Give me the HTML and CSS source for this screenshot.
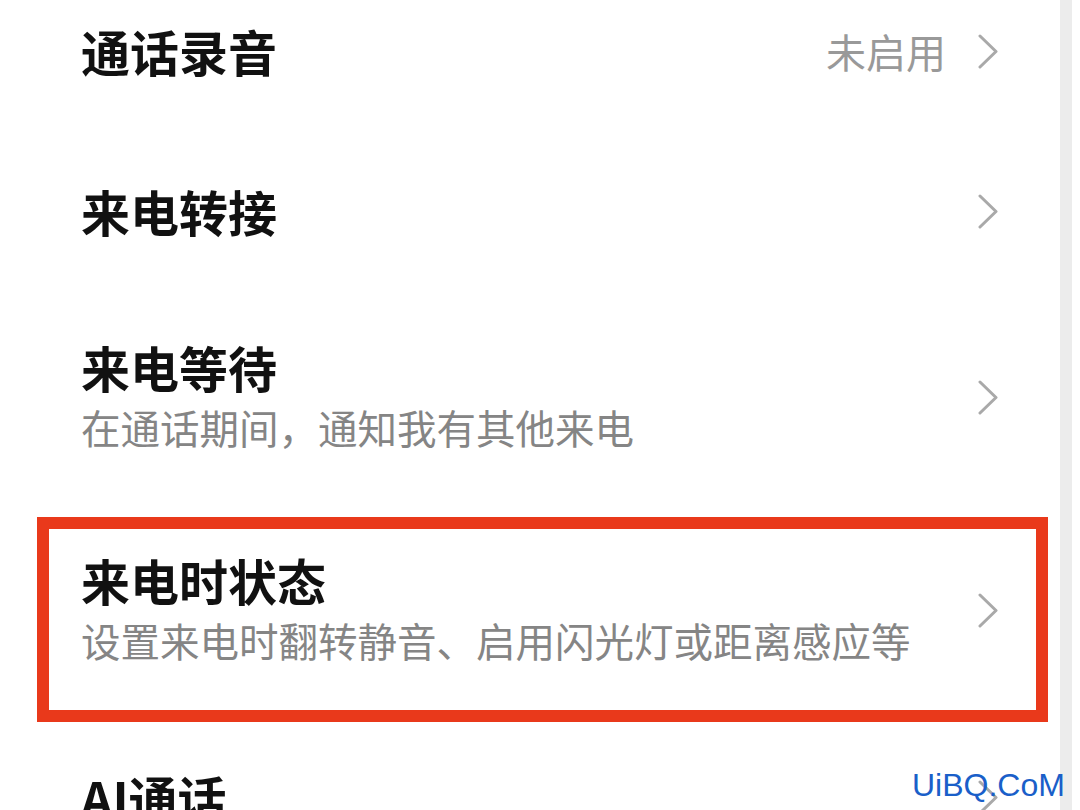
FILE: index.html
```html
<!DOCTYPE html>
<html lang="zh-CN">
<head>
  <meta charset="UTF-8" />
  <title>通话设置</title>
  <link rel="stylesheet" href="styles.css">
</head>
<body>
  <div class="screen">
    <div class="list">
      <div class="row">
        <div class="text">
          <div class="title">通话录音</div>
        </div>
        <span class="value">未启用</span>
        <svg class="chevron" viewBox="0 0 20 35"><polyline points="2,2 18,17.5 2,33" /></svg>
      </div>

      <div class="row">
        <div class="text">
          <div class="title">来电转接</div>
        </div>
        <svg class="chevron" viewBox="0 0 20 35"><polyline points="2,2 18,17.5 2,33" /></svg>
      </div>

      <div class="row two-line">
        <div class="text">
          <div class="title">来电等待</div>
          <div class="subtitle">在通话期间，通知我有其他来电</div>
        </div>
        <svg class="chevron" viewBox="0 0 20 35"><polyline points="2,2 18,17.5 2,33" /></svg>
      </div>

      <div class="row two-line highlighted">
        <div class="text">
          <div class="title">来电时状态</div>
          <div class="subtitle">设置来电时翻转静音、启用闪光灯或距离感应等</div>
        </div>
        <svg class="chevron" viewBox="0 0 20 35"><polyline points="2,2 18,17.5 2,33" /></svg>
      </div>

      <div class="row">
        <div class="text">
          <div class="title">AI通话</div>
        </div>
        <svg class="chevron" viewBox="0 0 20 35"><polyline points="2,2 18,17.5 2,33" /></svg>
      </div>
    </div>
    <div class="edge"></div>
  </div>

  <div class="watermark">UiBQ.CoM</div>
</body>
</html>
```

FILE: styles.css
```css
html, body {
  margin: 0;
  height: 100%;
  overflow: hidden;
}
body {
  background-color: #fff;
  font-family: "Noto Sans CJK SC", "Noto Sans", sans-serif;
  position: relative;
}
.screen {
  display: flex;
  height: 810px;
}
.list {
  width: 1060px;
  margin-top: -29px;
}
.edge {
  width: 12px;
  background-color: #ececec;
}

.row {
  position: relative;
  display: flex;
  align-items: center;
  height: 160px;
  padding: 0 62px 0 81px;
  box-sizing: border-box;
}
.row.two-line {
  height: 213px;
}
.text {
  flex: 1;
  min-width: 0;
}
.title {
  font-size: 49px;
  font-weight: 700;
  line-height: 58px;
  color: #111;
  white-space: nowrap;
}
.subtitle {
  font-size: 39.5px;
  line-height: 62px;
  color: #858585;
  white-space: nowrap;
}
.value {
  font-size: 40px;
  color: #999;
  margin-right: 32px;
}
.chevron {
  width: 20px;
  height: 35px;
  flex-shrink: 0;
}
.chevron polyline {
  fill: none;
  stroke: #a9a9a9;
  stroke-width: 3;
  stroke-linecap: round;
  stroke-linejoin: round;
}

/* red annotation frame drawn over the row */
.highlighted::after {
  content: "";
  position: absolute;
  top: 13px;
  left: 37px;
  right: 12px;
  height: 205px;
  border: 12px solid #e9391b;
  box-sizing: border-box;
}

.watermark {
  position: absolute;
  left: 912px;
  top: 769px;
  font-family: "Liberation Sans", Arial, sans-serif;
  font-size: 32px;
  line-height: 32px;
  color: #1a5fc9;
}
```
